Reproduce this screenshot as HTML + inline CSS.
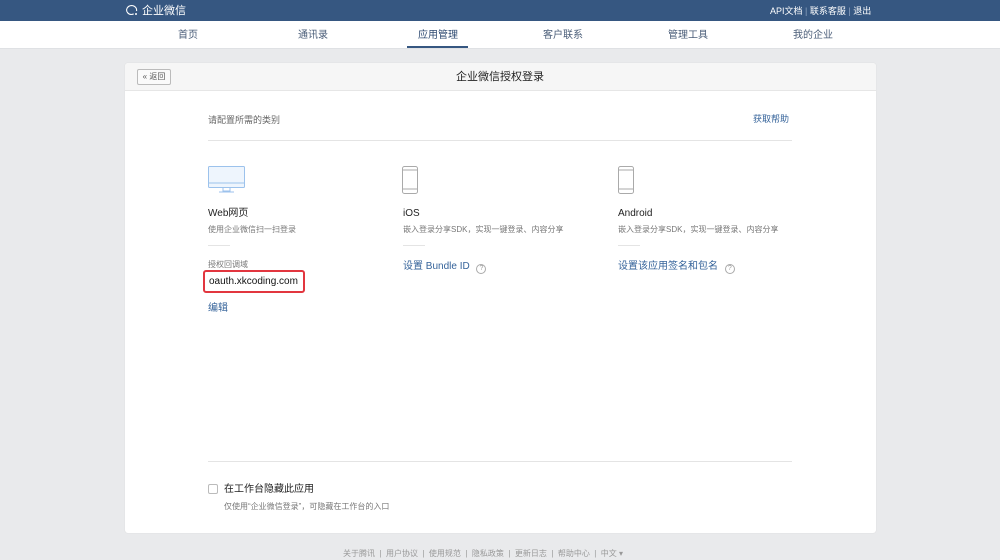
<!DOCTYPE html>
<html><head><meta charset="utf-8"><style>
*{margin:0;padding:0;box-sizing:border-box}
body{width:1000px;height:554px;overflow:hidden;background:#e9eaec;font-family:"Liberation Sans","Noto Sans CJK SC",sans-serif;position:relative;color:#333}
.a{position:absolute;white-space:nowrap;line-height:12px}
#top{position:absolute;left:0;top:0;width:1000px;height:21px;background:#365781}
#nav{position:absolute;left:0;top:21px;width:1000px;height:28px;background:#fff;border-bottom:1px solid #dfe1e4}
.n{position:absolute;top:9px;font-size:10px;color:#4a5d78;line-height:12px}
#card{position:absolute;left:125px;top:63px;width:751px;height:470px;background:#fff;border-radius:3px;box-shadow:0 0 1px #ccc}
#ch{position:absolute;left:0;top:0;width:751px;height:28px;background:#f6f6f6;border-bottom:1px solid #e6e6e6;border-radius:3px 3px 0 0}
.blue{color:#35639a}
.g{color:#787878;font-size:8px}
</style></head><body>
<div id="top">
<svg class="a" style="left:125px;top:4px" width="14" height="13" viewBox="0 0 14 13"><path d="M11.5 7A5 4.5 0 1 0 6 10.5c1 0 2-.2 2.7-.6" fill="none" stroke="#fff" stroke-width="1.1"/><circle cx="11" cy="10" r="1" fill="#fff"/></svg>
<div class="a" style="left:142px;top:5px;font-size:11px;color:#fff;line-height:13px">企业微信</div>
<div class="a" style="left:770px;top:5px;font-size:9px;color:#fff">API文档 <span style="color:#8ea3c0">|</span> 联系客服 <span style="color:#8ea3c0">|</span> 退出</div>
</div>
<div id="nav">
<div class="n" style="left:178px">首页</div>
<div class="n" style="left:298px">通讯录</div>
<div class="n" style="left:418px;color:#2f4b72">应用管理</div>
<div class="a" style="left:407px;top:25px;width:61px;height:2px;background:#365781"></div>
<div class="n" style="left:543px">客户联系</div>
<div class="n" style="left:668px">管理工具</div>
<div class="n" style="left:793px">我的企业</div>
</div>
<div id="card">
<div id="ch">
<div class="a" style="left:12px;top:6px;width:34px;height:16px;border:1px solid #bbb;border-radius:2px;background:#fafafa;font-size:8px;line-height:14px;text-align:center;color:#555">« 返回</div>
<div class="a" style="left:331px;top:8px;font-size:11px;color:#222;line-height:13px">企业微信授权登录</div>
</div>
<div class="a g" style="left:83px;top:51px;font-size:9px;color:#666">请配置所需的类别</div>
<div class="a blue" style="left:628px;top:50px;font-size:9px">获取帮助</div>
<div class="a" style="left:83px;top:77px;width:584px;height:1px;background:#e4e4e4"></div>
<svg class="a" style="left:83px;top:103px" width="37" height="28" viewBox="0 0 37 28"><rect x=".5" y=".5" width="36" height="21" rx="1" fill="#eef5fd" stroke="#9cc2ec"/><line x1="1" y1="17" x2="36" y2="17" stroke="#9cc2ec"/><path d="M15 22v3h7v-3M11 26h15" stroke="#9cc2ec" fill="none"/></svg>
<svg class="a" style="left:277px;top:103px" width="16" height="28" viewBox="0 0 16 28"><rect x=".5" y=".5" width="15" height="27" rx="2" fill="none" stroke="#aaa"/><line x1="1" y1="4" x2="15" y2="4" stroke="#aaa"/><line x1="1" y1="23" x2="15" y2="23" stroke="#aaa"/></svg>
<svg class="a" style="left:493px;top:103px" width="16" height="28" viewBox="0 0 16 28"><rect x=".5" y=".5" width="15" height="27" rx="2" fill="none" stroke="#aaa"/><line x1="1" y1="4" x2="15" y2="4" stroke="#aaa"/><line x1="1" y1="23" x2="15" y2="23" stroke="#aaa"/></svg>
<div class="a" style="left:83px;top:145px;font-size:10px;color:#222">Web网页</div>
<div class="a" style="left:278px;top:145px;font-size:10px;color:#222">iOS</div>
<div class="a" style="left:493px;top:145px;font-size:10px;color:#222">Android</div>
<div class="a g" style="left:83px;top:161px">使用企业微信扫一扫登录</div>
<div class="a g" style="left:278px;top:161px">嵌入登录分享SDK，实现一键登录、内容分享</div>
<div class="a g" style="left:493px;top:161px">嵌入登录分享SDK，实现一键登录、内容分享</div>
<div class="a" style="left:83px;top:182px;width:22px;height:1px;background:#e4e4e4"></div>
<div class="a" style="left:278px;top:182px;width:22px;height:1px;background:#e4e4e4"></div>
<div class="a" style="left:493px;top:182px;width:22px;height:1px;background:#e4e4e4"></div>
<div class="a g" style="left:83px;top:196px">授权回调域</div>
<div class="a" style="left:78px;top:207px;width:102px;height:23px;border:2px solid #e2363f;border-radius:3px"></div>
<div class="a" style="left:84px;top:213px;font-size:10px;color:#111">oauth.xkcoding.com</div>
<div class="a blue" style="left:83px;top:240px;font-size:10px">编辑</div>
<div class="a blue" style="left:278px;top:198px;font-size:10px">设置 Bundle ID <span style="display:inline-block;width:10px;height:10px;border:1px solid #aaa;border-radius:50%;font-size:7px;line-height:8px;text-align:center;color:#999;margin-left:4px;vertical-align:-1px">?</span></div>
<div class="a blue" style="left:493px;top:198px;font-size:10px">设置该应用签名和包名 <span style="display:inline-block;width:10px;height:10px;border:1px solid #aaa;border-radius:50%;font-size:7px;line-height:8px;text-align:center;color:#999;margin-left:4px;vertical-align:-1px">?</span></div>
<div class="a" style="left:83px;top:398px;width:584px;height:1px;background:#e4e4e4"></div>
<div class="a" style="left:83px;top:421px;width:10px;height:10px;border:1px solid #bbb;border-radius:2px"></div>
<div class="a" style="left:99px;top:421px;font-size:10px;color:#222">在工作台隐藏此应用</div>
<div class="a g" style="left:99px;top:438px">仅使用“企业微信登录”，可隐藏在工作台的入口</div>
</div>
<div class="a" style="left:343px;top:548px;font-size:8px;color:#999">关于腾讯 &nbsp;|&nbsp; 用户协议 &nbsp;|&nbsp; 使用规范 &nbsp;|&nbsp; 隐私政策 &nbsp;|&nbsp; 更新日志 &nbsp;|&nbsp; 帮助中心 &nbsp;|&nbsp; 中文 ▾</div>
</body></html>
